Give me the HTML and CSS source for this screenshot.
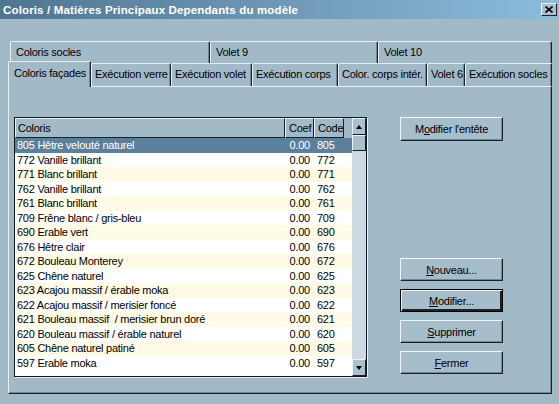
FILE: index.html
```html
<!DOCTYPE html>
<html>
<head>
<meta charset="utf-8">
<link rel="stylesheet" href="styles.css">
</head>
<body>
<div class="win">
  <div class="titlebar">
    <span class="title">Coloris / Matières Principaux Dependants du modèle</span>
    <span class="close"><svg width="8" height="7" viewBox="0 0 8 7"><path d="M0.5 0.5 L7.5 6.5 M7.5 0.5 L0.5 6.5" stroke="#000" stroke-width="1.6"/></svg></span>
  </div>
  <div class="content">
    <div class="tabrow back">
      <div class="tab w-socles">Coloris socles</div>
      <div class="tab w-v9">Volet 9</div>
      <div class="tab w-v10">Volet 10</div>
    </div>
    <div class="tabrow front">
      <div class="tab sel w1">Coloris façades</div>
      <div class="tab w2">Exécution verre</div>
      <div class="tab w3">Exécution volet</div>
      <div class="tab w4">Exécution corps</div>
      <div class="tab w5">Color. corps intér.</div>
      <div class="tab w6">Volet 6</div>
      <div class="tab w7">Exécution socles</div>
    </div>
    <div class="panel">
      <div class="list">
        <div class="grid">
          <div class="head">
            <div class="hc c-name">Coloris</div>
            <div class="hc c-coef">Coef</div>
            <div class="hc c-code">Code</div>
            <div class="hc c-fill"></div>
          </div>
          <div class="rows">
            <div class="r selected"><span class="c-name">805 Hêtre velouté naturel</span><span class="c-coef">0.00</span><span class="c-code">805</span></div>
            <div class="r"><span class="c-name">772 Vanille brillant</span><span class="c-coef">0.00</span><span class="c-code">772</span></div>
            <div class="r alt"><span class="c-name">771 Blanc brillant</span><span class="c-coef">0.00</span><span class="c-code">771</span></div>
            <div class="r"><span class="c-name">762 Vanille brillant</span><span class="c-coef">0.00</span><span class="c-code">762</span></div>
            <div class="r alt"><span class="c-name">761 Blanc brillant</span><span class="c-coef">0.00</span><span class="c-code">761</span></div>
            <div class="r"><span class="c-name">709 Frêne blanc / gris-bleu</span><span class="c-coef">0.00</span><span class="c-code">709</span></div>
            <div class="r alt"><span class="c-name">690 Erable vert</span><span class="c-coef">0.00</span><span class="c-code">690</span></div>
            <div class="r"><span class="c-name">676 Hêtre clair</span><span class="c-coef">0.00</span><span class="c-code">676</span></div>
            <div class="r alt"><span class="c-name">672 Bouleau Monterey</span><span class="c-coef">0.00</span><span class="c-code">672</span></div>
            <div class="r"><span class="c-name">625 Chêne naturel</span><span class="c-coef">0.00</span><span class="c-code">625</span></div>
            <div class="r alt"><span class="c-name">623 Acajou massif / érable moka</span><span class="c-coef">0.00</span><span class="c-code">623</span></div>
            <div class="r"><span class="c-name">622 Acajou massif / merisier foncé</span><span class="c-coef">0.00</span><span class="c-code">622</span></div>
            <div class="r alt"><span class="c-name">621 Bouleau massif &nbsp;/ merisier brun doré</span><span class="c-coef">0.00</span><span class="c-code">621</span></div>
            <div class="r"><span class="c-name">620 Bouleau massif / érable naturel</span><span class="c-coef">0.00</span><span class="c-code">620</span></div>
            <div class="r alt"><span class="c-name">605 Chêne naturel patiné</span><span class="c-coef">0.00</span><span class="c-code">605</span></div>
            <div class="r"><span class="c-name">597 Erable moka</span><span class="c-coef">0.00</span><span class="c-code">597</span></div>
          </div>
        </div>
        <div class="scroll">
          <div class="sbtn"><span class="arr up"></span></div>
          <div class="thumb"></div>
          <div class="track"></div>
          <div class="sbtn"><span class="arr down"></span></div>
        </div>
      </div>
      <div class="buttons">
        <div class="btn first">M<u>o</u>difier l'entête</div>
        <div class="btn"><u>N</u>ouveau...</div>
        <div class="btn default"><u>M</u>odifier...</div>
        <div class="btn"><u>S</u>upprimer</div>
        <div class="btn"><u>F</u>ermer</div>
      </div>
    </div>
  </div>
</div>
</body>
</html>
```
FILE: styles.css
```css
* { box-sizing: border-box; }
html, body { margin: 0; padding: 0; }
body { background: #a2b9c7; }
.win {
  width: 559px;
  height: 404px;
  background: #a2b9c7;
  font-family: "Liberation Sans", Arial, sans-serif;
  font-size: 11px;
  letter-spacing: -0.25px;
  color: #000;
  overflow: hidden;
}
.titlebar {
  height: 19px;
  background: linear-gradient(to right, #4f7591, #6f98b6 50%, #8cbcdc);
  display: flex;
  align-items: center;
  justify-content: space-between;
  padding: 0 2px 0 3px;
}
.title {
  color: #fff;
  font-weight: bold;
  font-size: 11.5px;
  letter-spacing: 0.15px;
}
.close {
  width: 16px;
  height: 13px;
  background: #a9c0cd;
  border-top: 1px solid #eef4f7;
  border-left: 1px solid #eef4f7;
  border-right: 1px solid #1a2228;
  border-bottom: 1px solid #1a2228;
  display: flex;
  align-items: center;
  justify-content: center;
}
.content { padding: 22px 0 0 8px; }
.tabrow { display: flex; }
.tabrow.back { height: 22px; margin-left: 2px; }
.tabrow.front { height: 23px; align-items: flex-end; }
.tab {
  height: 100%;
  border-top: 1px solid #e8f0f4;
  border-left: 1px solid #e8f0f4;
  border-right: 1px solid #18222a;
  box-shadow: inset -1px 0 #6f8796;
  border-radius: 2px 2px 0 0;
  padding-left: 3px;
  line-height: 20px;
  white-space: nowrap;
  overflow: hidden;
}
.back .tab { padding-left: 5px; }
.w-socles { width: 200px; }
.w-v9 { width: 168px; }
.w-v10 { width: 174px; }
.w1 { width: 83px; }
.w2 { width: 80px; }
.w3 { width: 81px; }
.w4 { width: 86px; }
.w5 { width: 89px; }
.w6 { width: 38px; }
.w7 { width: 87px; }
.tab.sel {
  height: 26px;
  margin-bottom: -1px;
  position: relative;
  z-index: 1;
  background: #a2b9c7;
  padding-left: 5px;
  line-height: 22px;
}
.panel {
  width: 544px;
  height: 308px;
  border-top: 1px solid #e8f0f4;
  border-left: 1px solid #e8f0f4;
  border-right: 1px solid #18222a;
  border-bottom: 1px solid #18222a;
  box-shadow: inset -1px -1px #6f8796;
  padding: 30px 0 0 5px;
  display: flex;
  gap: 33px;
}
.list {
  width: 353px;
  height: 260px;
  border: 1px solid #121a1f;
  box-shadow: 1px 1px 0 #e8f0f4;
  display: flex;
  background: #fff;
}
.grid { width: 337px; display: flex; flex-direction: column; }
.head { display: flex; height: 20px; }
.hc {
  background: #a2b9c7;
  border-top: 1px solid #e8f0f4;
  border-left: 1px solid #e8f0f4;
  border-right: 1px solid #18222a;
  border-bottom: 1px solid #18222a;
  line-height: 18px;
  padding-left: 2px;
  white-space: nowrap;
  overflow: hidden;
}
.head .c-coef { padding-left: 3px; }
.head .c-code { padding-left: 3px; }
.c-name { width: 270px; }
.c-coef { width: 29px; }
.c-code { width: 30px; }
.c-fill { width: 8px; border-right: none; border-left: none; border-top: none; border-bottom: none; }
.rows { flex: 1; background: #fff; }
.r {
  display: flex;
  height: 14.5px;
  line-height: 14.5px;
  white-space: nowrap;
  background: #fff;
}
.r.alt { background: #fffbe6; }
.r.selected { background: #5a809b; color: #fff; }
.r .c-name { padding-left: 2px; overflow: hidden; }
.r .c-coef { text-align: right; padding-right: 4px; }
.r .c-code { padding-left: 3px; }
.scroll {
  width: 14px;
  display: flex;
  flex-direction: column;
  background: #cddae2;
}
.sbtn, .thumb {
  background: #a9c0cd;
  border-top: 1px solid #eef4f7;
  border-left: 1px solid #eef4f7;
  border-right: 1px solid #1a2228;
  border-bottom: 1px solid #1a2228;
}
.sbtn {
  height: 17px;
  display: flex;
  align-items: center;
  justify-content: center;
}
.thumb { height: 16px; }
.track { flex: 1; }
.arr { width: 0; height: 0; border-left: 3.5px solid transparent; border-right: 3.5px solid transparent; }
.arr.up { border-bottom: 4px solid #000; }
.arr.down { border-top: 4px solid #000; }
.buttons {
  width: 103px;
  height: 257px;
  display: flex;
  flex-direction: column;
  gap: 8px;
}
.btn {
  height: 23px;
  background: #a6bdcb;
  border-top: 1px solid #eef4f7;
  border-left: 1px solid #eef4f7;
  border-right: 1px solid #1a2228;
  border-bottom: 1px solid #1a2228;
  box-shadow: inset -1px -1px #6f8796;
  display: flex;
  align-items: center;
  justify-content: center;
  white-space: nowrap;
}
.btn.first { margin-bottom: auto; height: 24px; }
.btn.default {
  border: 1px solid #000;
  box-shadow: inset 1px 1px #eef4f7, inset -2px -2px #1a2228;
}
u { text-decoration: underline; text-underline-offset: 1px; }
```
